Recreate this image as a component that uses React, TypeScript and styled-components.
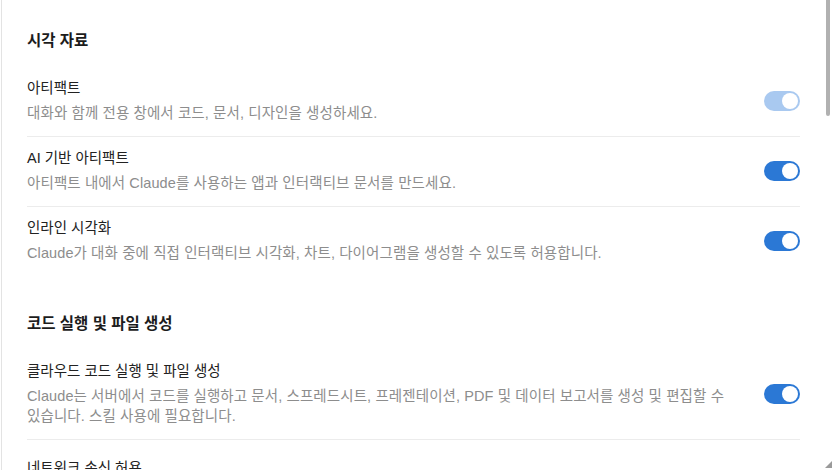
import React from "react";
import styled, { createGlobalStyle } from "styled-components";

const GlobalStyle = createGlobalStyle`
  html, body {
    margin: 0;
    padding: 0;
    background: #ffffff;
  }
  body {
    font-family: "Liberation Sans", "Noto Sans CJK KR", sans-serif;
    -webkit-font-smoothing: antialiased;
  }
`;

const Frame = styled.div`
  position: relative;
  width: 834px;
  height: 470px;
  overflow: hidden;
  background: #ffffff;
`;

const Panel = styled.div`
  margin-left: 1px;
  border-left: 1px solid #e3e3e3;
  height: 100%;
  padding: 29px 34px 0 25px;
  box-sizing: border-box;
`;

const Section = styled.section`
  & + & {
    margin-top: 36px;
  }
`;

const Heading = styled.h2`
  margin: 0 0 14px;
  font-size: 15.5px;
  line-height: 24px;
  font-weight: 700;
  color: #1c1c1c;
`;

const Row = styled.div<{ $last?: boolean; $loose?: boolean }>`
  display: flex;
  align-items: center;
  gap: 24px;
  padding: ${(p) => (p.$loose ? "18px 0 13px" : "11px 0 13px")};
  border-bottom: ${(p) => (p.$last ? "none" : "1px solid #ececec")};
`;

const Text = styled.div`
  flex: 1;
  min-width: 0;
  word-break: keep-all;
`;

const Title = styled.div`
  font-size: 14.5px;
  line-height: 20px;
  color: #222222;
`;

const Desc = styled.div`
  margin-top: 5px;
  font-size: 14.5px;
  line-height: 20px;
  letter-spacing: 0.1px;
  color: #8d8d8d;
`;

const Toggle = styled.div<{ $disabled?: boolean }>`
  flex: none;
  width: 36px;
  height: 20px;
  border-radius: 10px;
  background: ${(p) => (p.$disabled ? "#a9c9f0" : "#2b78d5")};
  display: flex;
  align-items: center;
  justify-content: flex-end;
  padding: 0 2px;
  box-sizing: border-box;
`;

const Knob = styled.span`
  width: 16px;
  height: 16px;
  border-radius: 50%;
  background: #ffffff;
`;

const ScrollThumb = styled.div`
  position: absolute;
  top: 0;
  right: 4px;
  width: 4px;
  height: 116px;
  border-radius: 0 0 3px 3px;
  background: #b1b1b1;
`;

const ScrollArrow = styled.svg`
  position: absolute;
  right: 2px;
  bottom: 2px;
`;

type Item = { title: string; desc: string; disabled?: boolean; loose?: boolean };

const visual: Item[] = [
  {
    title: "아티팩트",
    desc: "대화와 함께 전용 창에서 코드, 문서, 디자인을 생성하세요.",
    disabled: true,
  },
  {
    title: "AI 기반 아티팩트",
    desc: "아티팩트 내에서 Claude를 사용하는 앱과 인터랙티브 문서를 만드세요.",
  },
  {
    title: "인라인 시각화",
    desc: "Claude가 대화 중에 직접 인터랙티브 시각화, 차트, 다이어그램을 생성할 수 있도록 허용합니다.",
  },
];

const code: Item[] = [
  {
    title: "클라우드 코드 실행 및 파일 생성",
    desc: "Claude는 서버에서 코드를 실행하고 문서, 스프레드시트, 프레젠테이션, PDF 및 데이터 보고서를 생성 및 편집할 수 있습니다. 스킬 사용에 필요합니다.",
  },
  {
    title: "네트워크 송신 허용",
    desc: "Claude가 코드 실행 중에 인터넷에 접근하여 패키지를 설치하고 외부 API 및 웹 리소스와 상호 작용할 수 있도록 허용합니다. 신뢰할 수 있는 도메인만 허용하세요.",
    loose: true,
  },
];

function SettingRow({ item, last }: { item: Item; last?: boolean }) {
  return (
    <Row $last={last} $loose={item.loose}>
      <Text>
        <Title>{item.title}</Title>
        <Desc>{item.desc}</Desc>
      </Text>
      <Toggle $disabled={item.disabled}>
        <Knob />
      </Toggle>
    </Row>
  );
}

export default function App() {
  return (
    <>
      <GlobalStyle />
      <Frame>
        <Panel>
          <Section>
            <Heading>시각 자료</Heading>
            {visual.map((it, i) => (
              <SettingRow key={it.title} item={it} last={i === visual.length - 1} />
            ))}
          </Section>
          <Section>
            <Heading>코드 실행 및 파일 생성</Heading>
            {code.map((it) => (
              <SettingRow key={it.title} item={it} />
            ))}
          </Section>
        </Panel>
        <ScrollThumb />
        <ScrollArrow width="7" height="7" viewBox="0 0 7 7">
          <path d="M0 7 L7 0 L7 7 Z" fill="#9a9a9a" />
        </ScrollArrow>
      </Frame>
    </>
  );
}
